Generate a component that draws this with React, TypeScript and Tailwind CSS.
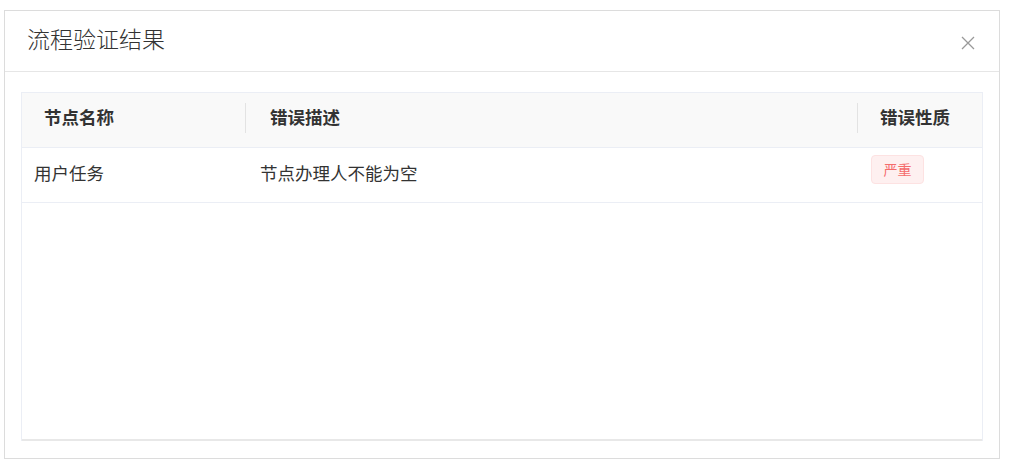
const rows = [{ name: "用户任务", desc: "节点办理人不能为空", level: "严重" }];

function CloseIcon() {
  return (
    <svg width="14" height="14" viewBox="0 0 14 14" className="text-[#999]">
      <path d="M1 1 L13 13 M13 1 L1 13" stroke="currentColor" strokeWidth="1.3" fill="none" />
    </svg>
  );
}

function HeaderCell({ label, divider, className }: { label: string; divider?: boolean; className: string }) {
  return (
    <div className={`relative flex h-full items-center pb-[5px] font-bold ${className}`}>
      {divider && <span className="absolute left-0 top-[10px] h-[30px] w-px bg-[#e3e3e3]" />}
      {label}
    </div>
  );
}

export default function App() {
  return (
    <div
      className="h-[460px] w-[1010px] bg-white pl-[4px] pt-[10px] text-[#333]"
      style={{ fontFamily: '"Noto Sans CJK SC", "Noto Sans", sans-serif' }}
    >
      <div className="flex h-[449px] w-[996px] flex-col border border-[#dcdcdc]">
        <div className="flex h-[61px] items-center justify-between border-b border-[#e6e6e6] pl-[22px] pr-[24px]">
          <span className="pb-[6px] text-[23px] font-light leading-none text-[#333]">流程验证结果</span>
          <span className="mt-[3px]">
            <CloseIcon />
          </span>
        </div>
        <div className="flex flex-1 flex-col px-[16px] pb-[17px] pt-[20px]">
          <div className="flex flex-1 flex-col border border-b-0 border-[#ebeef5]">
            <div className="flex h-[55px] border-b border-[#ebeef5] bg-[#f9f9f9] text-[17.5px]">
              <HeaderCell label="节点名称" className="w-[223px] pl-[22px]" />
              <HeaderCell label="错误描述" divider className="w-[612px] pl-[25px]" />
              <HeaderCell label="错误性质" divider className="flex-1 pl-[23px]" />
            </div>
            {rows.map((r) => (
              <div key={r.name} className="flex h-[55px] border-b border-[#ebeef5] text-[17.5px]">
                <div className="flex w-[223px] items-center pb-[3px] pl-[12px]">{r.name}</div>
                <div className="flex w-[612px] items-center pb-[3px] pl-[15px]">{r.desc}</div>
                <div className="flex flex-1 items-start pl-[14px] pt-[7px]">
                  <span className="flex h-[29px] w-[53px] items-center justify-center rounded-[4px] border border-[#fde2e2] bg-[#fef0f0] text-[14px] text-[#f56c6c]">
                    {r.level}
                  </span>
                </div>
              </div>
            ))}
            <div className="flex-1" />
            <div className="h-[2px] bg-[#e8e8e8]" />
          </div>
        </div>
      </div>
    </div>
  );
}
